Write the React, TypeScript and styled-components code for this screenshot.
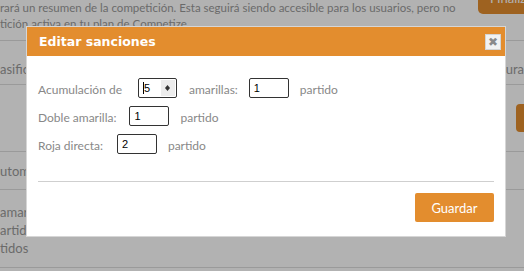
import React from "react";
import styled, { createGlobalStyle } from "styled-components";

const GlobalStyle = createGlobalStyle`
  html, body {
    margin: 0;
    padding: 0;
    background: #fff;
    overflow: hidden;
  }
  * {
    box-sizing: border-box;
  }
`;

const Page = styled.div`
  position: relative;
  width: 524px;
  height: 271px;
  overflow: hidden;
  font-family: Lato, "Open Sans", sans-serif;
  color: #999;
`;

const Notice = styled.div`
  height: 41px;
  display: flex;
  justify-content: space-between;
  border-bottom: 1px solid #ddd;
`;

const NoticeText = styled.p`
  margin: 0;
  font-size: 11.5px;
  line-height: 16px;
  white-space: nowrap;
`;

const FinishButton = styled.div`
  margin-top: -9px;
  height: 23px;
  width: 46px;
  flex-shrink: 0;
  background: #e38d2e;
  color: #fff;
  border-radius: 0 0 0 5px;
  font-size: 13px;
  line-height: 15px;
  padding-left: 12px;
  white-space: nowrap;
  overflow: hidden;
`;

const Row = styled.div<{ $h: number; $line?: boolean }>`
  height: ${(p) => p.$h}px;
  display: flex;
  justify-content: space-between;
  align-items: center;
  border-bottom: ${(p) => (p.$line ? "1px solid #ddd" : "none")};
  font-size: 13px;
  white-space: nowrap;
`;

const SideButton = styled.div`
  width: 8px;
  height: 28px;
  background: #e38d2e;
  border-radius: 4px 0 0 4px;
`;

const List = styled.div`
  padding-top: 13px;
  height: 78px;
  border-bottom: 1px solid #ddd;
  font-size: 13px;
  line-height: 18px;
`;

const Overlay = styled.div`
  position: absolute;
  inset: 0;
  background: rgba(0, 0, 0, 0.3);
`;

const Modal = styled.div`
  position: absolute;
  left: 26px;
  top: 26px;
  width: 480px;
  height: 211px;
  background: #fff;
  border: 1px solid #d6d6d6;
  display: flex;
  flex-direction: column;
`;

const Header = styled.div`
  height: 29px;
  background: #e38d2e;
  display: flex;
  align-items: center;
  justify-content: space-between;
  padding: 0 4px 0 12px;
`;

const Title = styled.h3`
  margin: 0;
  font-family: "DejaVu Sans", Verdana, sans-serif;
  font-weight: bold;
  font-size: 12.5px;
  color: #fff;
`;

const Close = styled.button`
  width: 16px;
  height: 16px;
  padding: 0;
  margin-top: 1px;
  border: 1px solid #d4d4d4;
  background: #f2f2f2;
  color: #8a8a8a;
  font-family: "DejaVu Sans", sans-serif;
  font-weight: bold;
  font-size: 12px;
  line-height: 13px;
  display: flex;
  align-items: center;
  justify-content: center;
`;

const Body = styled.div`
  padding: 22px 11px 0 11px;
  display: flex;
  flex-direction: column;
  gap: 8px;
`;

const FormRow = styled.div`
  display: flex;
  align-items: center;
  height: 20px;
  font-size: 12px;
  color: #888;
`;

const Label = styled.span<{ $space?: number }>`
  margin-right: ${(p) => p.$space ?? 11}px;
  padding-top: 3px;
  white-space: nowrap;
`;

const Input = styled.input`
  width: 40px;
  height: 20px;
  border: 1px solid #333;
  border-radius: 2px;
  padding: 0 4px;
  font-family: "Liberation Sans", Arial, sans-serif;
  font-size: 11px;
  color: #000;
  margin-right: 11px;
  outline: none;
`;

const NumberBox = styled.div`
  width: 39px;
  height: 20px;
  border: 1px solid #333;
  border-radius: 2px;
  display: flex;
  align-items: center;
  justify-content: space-between;
  padding: 0 1px 0 4px;
  margin-right: 12px;
  font-family: "Liberation Sans", Arial, sans-serif;
  font-size: 11px;
  color: #000;
`;

const Value = styled.span`
  border-left: 1px solid #000;
  line-height: 12px;
`;

const Spinner = styled.span`
  width: 14px;
  height: 16px;
  background: #ececec;
  display: flex;
  align-items: center;
  justify-content: center;
`;

const Divider = styled.hr`
  margin: 19px 0 0 0;
  border: none;
  border-top: 1px solid #cfcfcf;
`;

const Footer = styled.div`
  display: flex;
  justify-content: flex-end;
  padding-top: 3px;
`;

const SaveButton = styled.button`
  width: 79px;
  height: 29px;
  border: none;
  border-radius: 2px;
  background: #e38d2e;
  color: #fff;
  font-family: Lato, "Open Sans", sans-serif;
  font-size: 13px;
`;

export default function App() {
  return (
    <>
      <GlobalStyle />
      <Page>
        <Notice>
          <NoticeText>
            rará un resumen de la competición. Esta seguirá siendo accesible para los usuarios, pero no
            <br />
            tición activa en tu plan de Competize.
          </NoticeText>
          <FinishButton>Finalizar</FinishButton>
        </Notice>
        <Row $h={12} />
        <Row $h={32} $line>
          <span>asificación</span>
          <span>Configura</span>
        </Row>
        <Row $h={67} $line>
          <span />
          <SideButton />
        </Row>
        <Row $h={38} $line>
          <span>utomático</span>
        </Row>
        <List>
          amarillas
          <br />
          artidos
          <br />
          tidos
        </List>
        <Overlay />
        <Modal>
          <Header>
            <Title>Editar sanciones</Title>
            <Close>✖</Close>
          </Header>
          <Body>
            <FormRow>
              <Label $space={16}>Acumulación de</Label>
              <NumberBox>
                <Value>5</Value>
                <Spinner>
                  <svg width="5" height="6" viewBox="0 0 5 6">
                    <path d="M2.5 0 L5 3 L2.5 6 L0 3 Z" fill="#333" />
                  </svg>
                </Spinner>
              </NumberBox>
              <Label>amarillas:</Label>
              <Input defaultValue="1" />
              <Label>partido</Label>
            </FormRow>
            <FormRow>
              <Label $space={13}>Doble amarilla:</Label>
              <Input defaultValue="1" />
              <Label>partido</Label>
            </FormRow>
            <FormRow>
              <Label $space={14}>Roja directa:</Label>
              <Input defaultValue="2" />
              <Label>partido</Label>
            </FormRow>
            <Divider />
            <Footer>
              <SaveButton>Guardar</SaveButton>
            </Footer>
          </Body>
        </Modal>
      </Page>
    </>
  );
}
